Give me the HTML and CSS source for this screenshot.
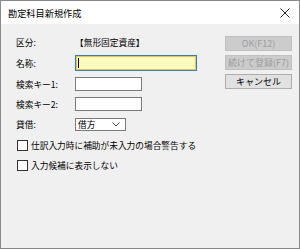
FILE: index.html
```html
<!DOCTYPE html>
<html lang="ja">
<head>
  <meta charset="UTF-8">
  <title>勘定科目新規作成</title>
  <link rel="stylesheet" href="styles.css">
</head>
<body>
  <div class="window">
    <div class="titlebar">
      <span class="title">勘定科目新規作成</span>
      <svg class="close" width="10" height="10" viewBox="0 0 10 10"><path d="M0.5 0.5 L9.5 9.5 M9.5 0.5 L0.5 9.5" stroke="#222" stroke-width="1" fill="none"/></svg>
    </div>
    <div class="content">
      <div class="form">
        <div class="row r1">
          <span class="label">区分:</span>
          <span>【無形固定資産】</span>
        </div>
        <div class="row r2">
          <span class="label">名称:</span>
          <span class="input name"><span class="caret"></span></span>
        </div>
        <div class="row r3">
          <span class="label">検索キー1:</span>
          <span class="input key"></span>
        </div>
        <div class="row r4">
          <span class="label">検索キー2:</span>
          <span class="input key"></span>
        </div>
        <div class="row r5">
          <span class="label">貸借:</span>
          <span class="select">借方
            <svg class="arrow" width="8" height="5" viewBox="0 0 8 5"><path d="M0.5 0.5 L4 4 L7.5 0.5" fill="none" stroke="#444" stroke-width="1"/></svg>
          </span>
        </div>
        <div class="check c1">
          <span class="box"></span>
          <span>仕訳入力時に補助が未入力の場合警告する</span>
        </div>
        <div class="check c2">
          <span class="box"></span>
          <span>入力候補に表示しない</span>
        </div>
      </div>
      <div class="buttons">
        <div class="btn disabled">OK(F12)</div>
        <div class="btn disabled">続けて登録(F7)</div>
        <div class="btn">キャンセル</div>
      </div>
    </div>
  </div>
</body>
</html>
```

FILE: styles.css
```css
* {
  box-sizing: border-box;
}

body {
  margin: 0;
  background: #fff;
  font-family: "Noto Sans CJK JP", "Noto Sans", sans-serif;
  font-size: 8.7px;
  color: #000;
}

.window {
  width: 300px;
  height: 249px;
  border: 1px solid #8a8a8a;
  background: #f0f0f0;
  display: flex;
  flex-direction: column;
}

.titlebar {
  height: 23px;
  background: #fff;
  display: flex;
  align-items: center;
  justify-content: space-between;
  padding: 0 9px 0 7px;
}

.title {
  font-size: 9.2px;
}

.content {
  flex: 1;
  display: flex;
  justify-content: space-between;
  padding: 7px 7px 0 15px;
}

.form {
  display: flex;
  flex-direction: column;
}

.row {
  display: flex;
  align-items: center;
  height: 20px;
}

.r1 {
  margin-top: 1px;
}

.r2 {
  height: 22px;
}

.r5 {
  height: 21px;
}

.label {
  width: 59px;
}

.input {
  display: block;
  height: 14px;
  background: #fff;
  border: 1px solid #7a7a7a;
}

.input.name {
  width: 122px;
  height: 16px;
  background: #ffffc0;
  border: 1px solid #2b7fd4;
  outline: 1px solid #f5c342;
  outline-offset: -2px;
  padding: 2px 0 0 2px;
}

.caret {
  display: block;
  width: 1px;
  height: 10px;
  background: #000;
}

.input.key {
  width: 67px;
}

.select {
  display: flex;
  align-items: center;
  justify-content: space-between;
  width: 51px;
  height: 13px;
  background: #fff;
  border: 1px solid #7a7a7a;
  padding: 0 5px 0 2px;
}

.check {
  display: flex;
  align-items: center;
  height: 20px;
  margin-left: 1px;
}

.box {
  width: 11px;
  height: 11px;
  border: 1px solid #333;
  background: #fff;
  margin-right: 3px;
}

.buttons {
  display: flex;
  flex-direction: column;
  gap: 4px;
  padding-top: 5px;
}

.btn {
  width: 67px;
  height: 15px;
  display: flex;
  align-items: center;
  justify-content: center;
  background: #e1e1e1;
  border: 1px solid #adadad;
  font-size: 9px;
}

.btn.disabled {
  background: #cccccc;
  border-color: #bfbfbf;
  color: #9c9c9c;
}
```
